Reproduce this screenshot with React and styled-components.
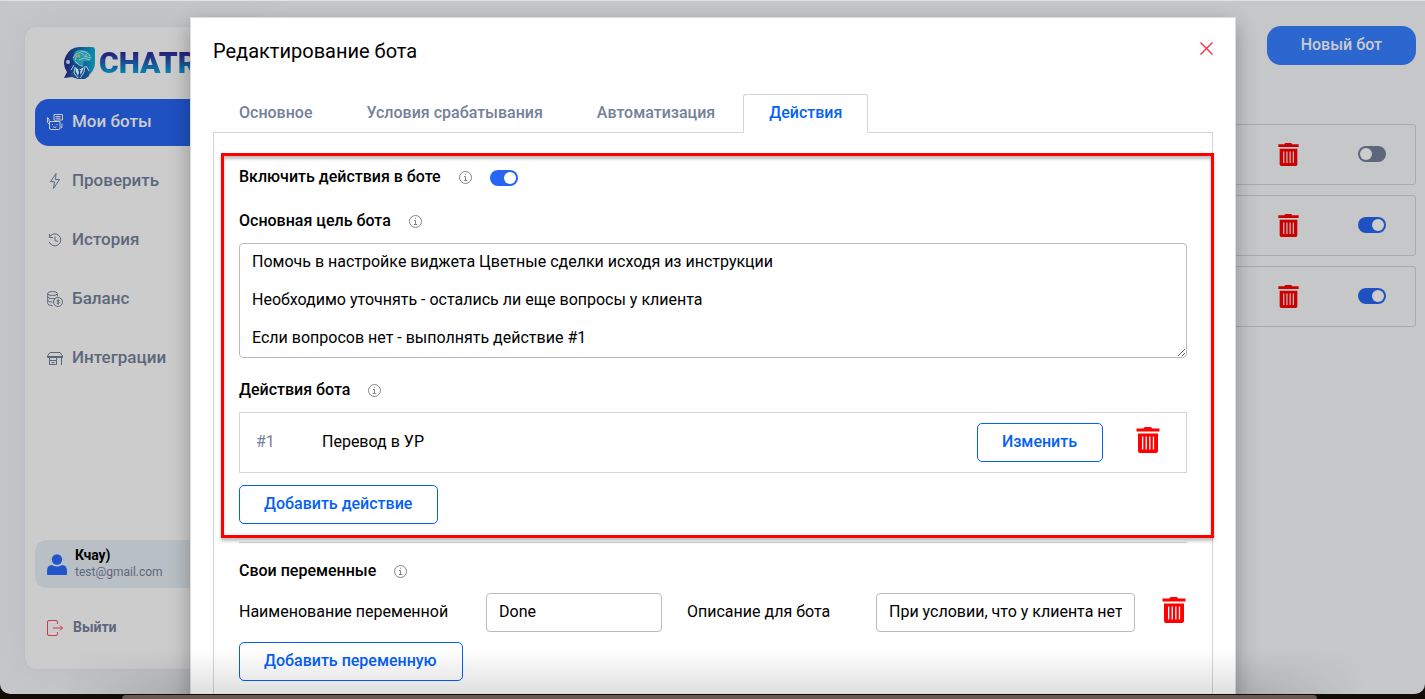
import React, { useState } from 'react';
import styled, { createGlobalStyle, css } from 'styled-components';

const bots = [
    { id: 1, active: false },
    { id: 2, active: true },
    { id: 3, active: true },
];

const goal = `Помочь в настройке виджета Цветные сделки исходя из инструкции

Необходимо уточнять - остались ли еще вопросы у клиента

Если вопросов нет - выполнять действие #1`;

const BotIcon = () => (
    <Icon viewBox="0 0 16 16">
        <path d="M2.5 7.5h10.5v6.5q0 1.500-1.500 1.500h-7.500q-1.500 0-1.500-1.500zM.5 3.500v5l2 2M.5 3.500l1.500 1.500v2.500M15 9.500v4l-1.500 .5M7 .5h8.500v5.500h-6l-1.500 1.500v-1.500h-1zM8.500 2.500h5M8.500 4.200h5M5.500 10v1M10 10v1M6 12.800q1.800 1.200 3.500 0" />
    </Icon>
);

const BoltIcon = () => (
    <Icon viewBox="0 0 16 16"><path d="M9 .5L3.500 8.700h4L6.500 15.500 12.500 6.500h-4z" /></Icon>
);

const HistoryIcon = () => (
    <Icon viewBox="0 0 16 16"><path d="M2.500 5A6 6 0 1 1 2.200 10M2.500 2v3.500h3.500M8 4.500v4l3 1" /></Icon>
);

const CoinsIcon = () => (
    <Icon viewBox="0 0 16 16">
        <ellipse cx="5.500" cy="2.500" rx="4.800" ry="2" />
        <path d="M.7 2.500v10q0 2 4.800 2.200M10.300 2.500v3M.7 5.800q.5 1.800 4.800 1.900 2 0 3-.5M.7 9.200q.5 1.700 4.800 1.900" />
        <circle cx="11" cy="11" r="4.500" />
        <path d="M12.500 9.500q-2.500-1-2.500 .4c0 1.300 2.300.8 2.300 2.100q-.2 1.200-2.400.4M11.200 8.500v5" />
    </Icon>
);

const ShopIcon = () => (
    <Icon viewBox="0 0 16 16">
        <path d="M3 2.500h10l2.500 3.500v1.500H.5V6zM.5 6.500h15M2.500 7.500v7h7v-7M14.500 7.500V15M2.500 10.500h7M4.500 12.500h3" />
    </Icon>
);

const LogoMark = () => (
    <svg width="32" height="32" viewBox="0 0 32 32" aria-hidden="true">
        <defs>
            <linearGradient id="mark" x1="0" y1="0" x2="1" y2="0">
                <stop offset="0" stopColor="#211e70" />
                <stop offset="1" stopColor="#078fb0" />
            </linearGradient>
        </defs>
        <path d="M16 0h13q3 0 3 3v13a16 16 0 0 1-23 14l-8 1 3-6A16 16 0 0 1 16 0z" fill="url(#mark)" />
        <path d="M11 7q2-5 9-4 8 1 9 8-1 4-8 3l-1 4-7-1-3-4z" fill="#2d94ab" />
        <path d="M10 11l3-4 5-2M18 4l5 1 4 4M21 9l7 2M16 13l5-2 6 2M12 14l4 4 4 1M14 8l-2 5M18 6l3 2M23 7v3" fill="none" stroke="#7fc9cd" strokeWidth="1" />
        <path d="M11 19l-3 4v6l7 3h7l4-3v-6l-4-4-4 3z" fill="#1c4c8c" />
        <path d="M11 18l-3 5M12 20l-1 6 4 5M22 19l-1 6-4 6M23 19l3 5" fill="none" stroke="#a3d3d8" strokeWidth="1" />
        <path d="M12 20l4 3 5-3-2 5-3 6-3-6z" fill="#b9d8dc" />
        <path d="M15 23h3l-1 2 1 4-2 2-1-2 1-4z" fill="#173a78" />
        <circle cx="16" cy="9" r="1.500" fill="#c79b32" />
        <circle cx="5" cy="15" r="2" fill="#a9b9d2" />
    </svg>
);

const TrashIcon = ({ size }) => (
    <svg width={size} height={size} viewBox="0 0 24 26" fill="currentColor" aria-hidden="true">
        <path fillRule="evenodd" d="M7.500 1.500Q7.500 0 9 0h5.500q1.500 0 1.500 1.500h7.500v3H.5v-3zM2 6.500h20V24q0 2-2 2H4q-2 0-2-2zM6 9.500v13h1.300v-13zm3.600 0v13h1.300v-13zm3.600 0v13h1.300v-13zm3.600 0v13h1.300v-13z" />
    </svg>
);

const InfoIcon = () => (
    <svg width="13" height="13" viewBox="0 0 13 13" fill="none" stroke="#858585" aria-hidden="true">
        <circle cx="6.500" cy="6.500" r="6" />
        <path d="M5 5.500h1.500v4M4.800 9.500h3.500M6 3.300h1" />
    </svg>
);

const menu = [
    { text: 'Мои боты', icon: BotIcon, active: true },
    { text: 'Проверить', icon: BoltIcon },
    { text: 'История', icon: HistoryIcon },
    { text: 'Баланс', icon: CoinsIcon },
    { text: 'Интеграции', icon: ShopIcon },
];

const tabs = ['Основное', 'Условия срабатывания', 'Автоматизация', 'Действия'];

const App = () => {
    const [tab, setTab] = useState('Действия');

    return (
        <Desktop>
            <GlobalStyle />
            <Browser>
                <Page>
                    <Sidebar>
                        <Logo href="#">
                            <LogoMark />
                            <span>CHATR</span>
                        </Logo>
                        <Nav>
                            {menu.map(({ text, icon: ItemIcon, active }) => (
                                <NavLink href="#" key={text} $active={active}>
                                    <ItemIcon />
                                    {text}
                                </NavLink>
                            ))}
                        </Nav>
                        <User>
                            <svg width="20" height="21" viewBox="0 0 20 21" fill="#2155c9" aria-hidden="true">
                                <circle cx="10" cy="5.500" r="5.200" />
                                <path d="M0 20v-3q0-6 5-6 5 3 10 0 5 0 5 6v3q0 1-1 1H1q-1 0-1-1z" />
                            </svg>
                            <div>
                                <strong>Кчау)</strong>
                                <span>test@gmail.com</span>
                            </div>
                        </User>
                        <Logout href="#">
                            <Icon viewBox="0 0 16 16">
                                <path d="M10.500 4V2q0-1.500-1.500-1.500H2Q.5.5.5 2v12q0 1.500 1.500 1.500h7q1.500 0 1.500-1.500v-2M6 8h9.500M13 5.500L15.500 8 13 10.500" />
                            </Icon>
                            Выйти
                        </Logout>
                    </Sidebar>
                    <Content>
                        <NewBot>Новый бот</NewBot>
                        <BotList>
                            {bots.map((bot) => (
                                <BotRow key={bot.id}>
                                    <Delete $dim aria-label="Удалить бота"><TrashIcon size={23} /></Delete>
                                    <Switch type="checkbox" $dim defaultChecked={bot.active} aria-label="Бот включен" />
                                </BotRow>
                            ))}
                        </BotList>
                    </Content>
                </Page>

                <Modal role="dialog" aria-labelledby="modal-title">
                    <ModalHeader>
                        <h1 id="modal-title">Редактирование бота</h1>
                        <Close aria-label="Закрыть">
                            <svg width="13" height="13" viewBox="0 0 13 13" fill="none" stroke="currentColor" strokeWidth="1.400">
                                <path d="M.5.5l12 12M12.500.5l-12 12" />
                            </svg>
                        </Close>
                    </ModalHeader>
                    <Tabs role="tablist">
                        {tabs.map((name) => (
                            <Tab key={name} role="tab" aria-selected={tab === name} $active={tab === name} onClick={() => setTab(name)}>
                                {name}
                            </Tab>
                        ))}
                    </Tabs>
                    <Panel role="tabpanel">
                        <Highlight>
                            <Heading>
                                <label htmlFor="enabled">Включить действия в боте</label>
                                <InfoIcon />
                                <Switch id="enabled" type="checkbox" defaultChecked />
                            </Heading>
                            <Heading>
                                <label htmlFor="goal">Основная цель бота</label>
                                <InfoIcon />
                            </Heading>
                            <Goal id="goal" defaultValue={goal} />
                            <Heading>
                                <h2>Действия бота</h2>
                                <InfoIcon />
                            </Heading>
                            <Action>
                                <small>#1</small>
                                <span>Перевод в УР</span>
                                <OutlineButton>Изменить</OutlineButton>
                                <Delete aria-label="Удалить действие"><TrashIcon size={26} /></Delete>
                            </Action>
                            <OutlineButton>Добавить действие</OutlineButton>
                        </Highlight>
                        <Divider />
                        <Variables>
                            <Heading>
                                <h2>Свои переменные</h2>
                                <InfoIcon />
                            </Heading>
                            <VariableRow>
                                <label htmlFor="var-name">Наименование переменной</label>
                                <Input id="var-name" defaultValue="Done" />
                                <label htmlFor="var-text">Описание для бота</label>
                                <Input id="var-text" defaultValue="При условии, что у клиента нет вопросов" />
                                <Delete aria-label="Удалить переменную"><TrashIcon size={26} /></Delete>
                            </VariableRow>
                            <OutlineButton>Добавить переменную</OutlineButton>
                        </Variables>
                    </Panel>
                </Modal>
                <Shade />
            </Browser>
            <Dock />
        </Desktop>
    );
};

const GlobalStyle = createGlobalStyle`
* {
    box-sizing: border-box;
}

body {
    margin: 0;
    font-family: Roboto, "Liberation Sans", sans-serif;
    font-size: 16px;
    line-height: 19px;
    color: #000;
}

h1, h2 {
    margin: 0;
    font-size: 16px;
    font-weight: 500;
}

button, input, textarea {
    font: inherit;
    color: inherit;
}

button {
    cursor: pointer;
}
`;

const Desktop = styled.div`
height: 100vh;
display: flex;
flex-direction: column;
overflow: hidden;
background: #120c06;
`;

const Browser = styled.div`
position: relative;
flex: 1;
min-height: 0;
overflow: hidden;
border-top: 1px solid #dfe1e2;
border-radius: 0 0 10px 10px;
background: #c6c7c9;
`;

const Dock = styled.div`
height: 4px;
margin: 1px 108px 0 122px;
border-radius: 8px 8px 0 0;
background: #655a54;
`;

const Page = styled.div`
height: 100%;
display: flex;
padding: 25px 9px 24px 24px;
`;

const Sidebar = styled.aside`
width: 240px;
display: flex;
flex-direction: column;
padding: 18px 10px 32px;
border: 1px solid #b9c0c9;
border-radius: 12px;
background: #ccc;
box-shadow: 0 0 32px #afb3b980;
`;

const Logo = styled.a`
display: flex;
align-items: center;
gap: 4px;
padding-left: 28px;
height: 36px;
text-decoration: none;

& span {
    font: 900 30px/36px Roboto, sans-serif;
    background: linear-gradient(180deg, #291d78 20%, #0786b0 80%);
    background-clip: text;
    -webkit-background-clip: text;
    -webkit-text-fill-color: transparent;
}
`;

const Nav = styled.nav`
display: flex;
flex-direction: column;
gap: 12px;
margin-top: 18px;
`;

const NavLink = styled.a`
height: 47px;
display: flex;
align-items: center;
gap: 9px;
padding: 0 12px 2px;
border-radius: 14px;
font-size: 17px;
font-weight: 500;
text-decoration: none;
color: ${(props) => (props.$active ? '#ccc' : '#5d677c')};
background: ${(props) => (props.$active ? '#1f51c2' : 'none')};
`;

const Icon = styled.svg`
width: 16px;
height: 16px;
flex: none;
fill: none;
stroke: currentColor;
stroke-width: 1;
`;

const User = styled.div`
height: 48px;
display: flex;
align-items: center;
gap: 8px;
margin-top: auto;
padding: 0 12px;
border-radius: 12px;
background: #b9c0c5;

& div {
    display: flex;
    flex-direction: column;
}

& strong {
    font-size: 14px;
    line-height: 17px;
}

& span {
    font-size: 12px;
    line-height: 17px;
    color: #5d677c;
}
`;

const Logout = styled.a`
display: flex;
align-items: center;
gap: 10px;
margin-top: 30px;
padding-left: 12px;
font-size: 14px;
font-weight: 700;
text-decoration: none;
color: #5d677c;

& svg {
    color: #cc3945;
}
`;

const Content = styled.main`
flex: 1;
display: flex;
flex-direction: column;
align-items: flex-end;
`;

const NewBot = styled.button`
height: 39px;
padding: 0 34px 2px;
border: 0;
border-radius: 14px;
font-weight: 500;
color: #ccc;
background: #2b67cf;
`;

const BotList = styled.div`
align-self: stretch;
display: flex;
flex-direction: column;
gap: 10px;
margin-top: 59px;
`;

const BotRow = styled.div`
height: 61px;
display: flex;
align-items: center;
justify-content: flex-end;
gap: 58px;
padding: 0 29px 1px 0;
border: 1px solid #aaabad;
border-radius: 3px;
`;

const Switch = styled.input`
appearance: none;
width: 28px;
height: 16px;
flex: none;
margin: 0;
padding: 2px;
border-radius: 8px;
background: ${(props) => (props.$dim ? '#5d677c' : '#74819b')};

&::before {
    content: '';
    display: block;
    width: 12px;
    height: 12px;
    border-radius: 50%;
    background: ${(props) => (props.$dim ? '#ccc' : '#fff')};
}

&:checked {
    background: ${(props) => (props.$dim ? '#1f51c2' : '#2765f2')};
}

&:checked::before {
    margin-left: auto;
}
`;

const Delete = styled.button`
display: flex;
padding: 0 0 ${(props) => (props.$dim ? 0 : '5px')};
border: 0;
background: none;
color: ${(props) => (props.$dim ? '#cc0000' : '#ff0000')};
`;

const Modal = styled.section`
position: absolute;
top: 16px;
left: 190px;
right: 189px;
padding: 21px 22px;
border: 1px solid #ddd;
background: #fff;
box-shadow: 0 8px 20px #0000004d;
`;

const ModalHeader = styled.header`
display: flex;
justify-content: space-between;
align-items: flex-start;
height: 55px;

& h1 {
    font-size: 20px;
    font-weight: 400;
    line-height: 24px;
}
`;

const Close = styled.button`
display: flex;
padding: 3px 0;
border: 0;
background: none;
color: #f5303e;
`;

const Tabs = styled.div`
display: flex;
gap: 2px;
`;

const Tab = styled.button`
height: 39px;
padding: 0 25px 2px;
margin-bottom: -1px;
border: 1px solid transparent;
border-radius: 3px 3px 0 0;
font-weight: 500;
color: #74819b;
background: none;

${(props) => props.$active && css`
    border-color: #d5d5d5;
    border-bottom-color: #fff;
    color: #0561f5;
    background: #fff;
`}
`;

const Panel = styled.div`
padding: 20px 0;
border: 1px solid #d5d5d5;
`;

const Highlight = styled.div`
display: flex;
flex-direction: column;
align-items: flex-start;
margin: 0 -2px 0 7px;
padding: 11px 24px 11px 15px;
border: 3px solid #f00;
box-shadow: 0 3px 3px #00000040, inset 0 3px 3px #00000040;
`;

const Heading = styled.div`
display: flex;
align-items: center;
gap: 18px;
height: 19px;
font-weight: 500;

& + & {
    margin-top: 25px;
}

& svg, & input {
    margin-top: 2px;
}
`;

const Goal = styled.textarea`
width: 100%;
height: 115px;
margin: 13px 0 22px;
padding: 8px 12px;
border: 1px solid #bbb;
border-radius: 4px;
overflow: hidden;
resize: vertical;
`;

const Action = styled.div`
align-self: stretch;
height: 61px;
display: flex;
align-items: center;
margin: 13px 0 12px;
padding: 0 25px 0 16px;
border: 1px solid #d5d5d5;

& small {
    width: 66px;
    padding-bottom: 2px;
    font-size: 16px;
    color: #74819b;
}

& span {
    flex: 1;
    padding-bottom: 2px;
}

& button + button {
    margin-left: 32px;
}
`;

const OutlineButton = styled.button`
height: 39px;
padding: 0 25px 2px 24px;
border: 1px solid #0561f5;
border-radius: 5px;
font-weight: 500;
color: #0561f5;
background: #fff;
`;

const Divider = styled.hr`
margin: 4px 25px 18px;
border: 0;
border-top: 1px solid #c4c4c4;
`;

const Variables = styled.div`
padding: 0 25px;
`;

const VariableRow = styled.div`
display: grid;
grid-template-columns: 247px 176px 214px 1fr 26px;
align-items: center;
margin: 13px 0 10px;

& label {
    padding-bottom: 2px;
}

& label:nth-of-type(2) {
    padding-left: 25px;
}

& input:nth-of-type(2) {
    margin-right: 26px;
}
`;

const Input = styled.input`
min-width: 0;
height: 39px;
padding: 0 12px 2px;
border: 1px solid #bbb;
border-radius: 4px;
background: #fff;
`;

const Shade = styled.div`
position: absolute;
left: 60px;
right: 60px;
bottom: 0;
height: 44px;
background: linear-gradient(180deg, #00000000, #00000020);
mask-image: linear-gradient(90deg, transparent, #000 120px, #000 calc(100% - 120px), transparent);
pointer-events: none;
`;

export default App;
